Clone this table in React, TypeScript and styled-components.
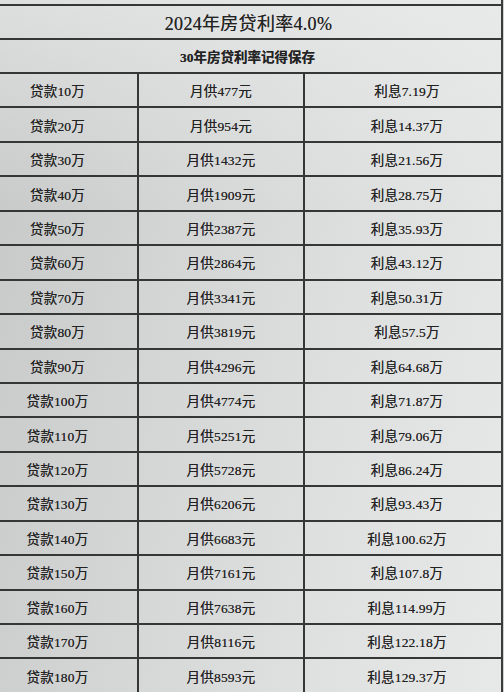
import React from "react";
import styled, { createGlobalStyle } from "styled-components";

interface loanRow {
  amount: number;
  monthly: string;
  interest: string;
}

const rows: loanRow[] = [
  { amount: 10, monthly: "477", interest: "7.19" },
  { amount: 20, monthly: "954", interest: "14.37" },
  { amount: 30, monthly: "1432", interest: "21.56" },
  { amount: 40, monthly: "1909", interest: "28.75" },
  { amount: 50, monthly: "2387", interest: "35.93" },
  { amount: 60, monthly: "2864", interest: "43.12" },
  { amount: 70, monthly: "3341", interest: "50.31" },
  { amount: 80, monthly: "3819", interest: "57.5" },
  { amount: 90, monthly: "4296", interest: "64.68" },
  { amount: 100, monthly: "4774", interest: "71.87" },
  { amount: 110, monthly: "5251", interest: "79.06" },
  { amount: 120, monthly: "5728", interest: "86.24" },
  { amount: 130, monthly: "6206", interest: "93.43" },
  { amount: 140, monthly: "6683", interest: "100.62" },
  { amount: 150, monthly: "7161", interest: "107.8" },
  { amount: 160, monthly: "7638", interest: "114.99" },
  { amount: 170, monthly: "8116", interest: "122.18" },
  { amount: 180, monthly: "8593", interest: "129.37" },
];

const App = () => {
  return (
    <Page>
      <GlobalStyle />
      <Sheet>
        <TitleRow>2024年房贷利率4.0%</TitleRow>
        <SubtitleRow>30年房贷利率记得保存</SubtitleRow>
        {rows.map((row) => (
          <Row key={row.amount}>
            <Cell>贷款{row.amount}万</Cell>
            <Cell>月供{row.monthly}元</Cell>
            <Cell shift={10}>利息{row.interest}万</Cell>
          </Row>
        ))}
      </Sheet>
    </Page>
  );
};

export default App;

const GlobalStyle = createGlobalStyle`
  html, body {
    margin: 0;
    padding: 0;
    overflow: hidden;
    background: #d6d7d6;
  }
`;

const Page = styled.div`
  width: 504px;
  height: 692px;
  overflow: hidden;
  background: linear-gradient(90deg, #c9cac9 0%, #d9dad9 70%, #cfd0cf 100%);
`;

const Sheet = styled.div`
  width: 523px;
  margin-left: -22px;
  padding-top: 4px;
  height: 688px;
  background:
    linear-gradient(180deg, rgba(236, 237, 237, 0.6) 0%, rgba(236, 237, 237, 0) 30%),
    linear-gradient(100deg, #c5c6c6 0%, #d3d4d4 35%, #dfe0e0 70%, #e7e8e8 100%);
  border-right: 2px solid #3c3c3c;
  color: #232323;
  font-family: "Liberation Serif", "Noto Sans CJK SC", serif;
  text-shadow: 0 0 0.6px rgba(30, 30, 30, 0.7);
  box-sizing: content-box;
  > div {
    border-top: 2px solid #363636;
  }
`;

const TitleRow = styled.div`
  height: 32px;
  display: flex;
  align-items: center;
  justify-content: center;
  padding-left: 18px;
  font-size: 18px;
  letter-spacing: 0.3px;
`;

const SubtitleRow = styled.div`
  height: 32px;
  display: flex;
  align-items: center;
  justify-content: center;
  padding-left: 16px;
  font-size: 13.5px;
  font-weight: 700;
`;

const Row = styled.div`
  height: 32.45px;
  display: grid;
  grid-template-columns: 161px 166px 194px;
`;

const Cell = styled.div<{ shift?: number }>`
  display: flex;
  align-items: center;
  justify-content: center;
  padding-left: ${(p) => p.shift || 0}px;
  font-size: 13.5px;
  letter-spacing: 0.2px;
  border-right: 2px solid #363636;

  &:last-child {
    border-right: none;
  }
`;
